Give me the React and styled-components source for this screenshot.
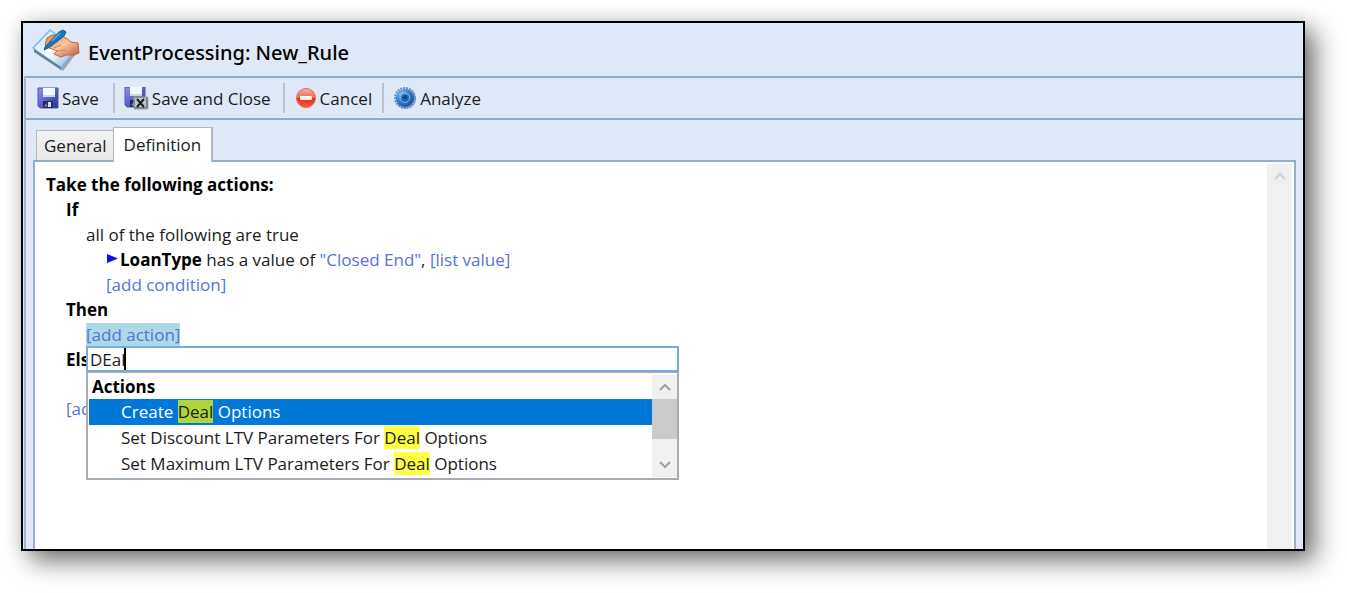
// src/App.jsx
import React, { useState } from 'react';
import styled, { createGlobalStyle } from 'styled-components';

const GlobalStyle = createGlobalStyle`
  *, *::before, *::after {
    box-sizing: border-box;
  }

  body {
    margin: 0;
    background: #fff;
    color: #1b1b1b;
    font-family: "Open Sans", "Noto Sans", sans-serif;
    font-size: 17px;
    line-height: 25px;
  }

  button, input {
    font: inherit;
    color: inherit;
  }
`;

const Page = styled.div`
  display: flex;
  min-height: 100vh;
  padding: 21px 42px 42px 21px;
`;

const Window = styled.main`
  flex: 1;
  display: flex;
  flex-direction: column;
  min-width: 0;
  background: #dfe8f7;
  border: 2px solid #000;
  box-shadow: 10px 10px 24px rgba(0, 0, 0, 0.55), 0 0 16px rgba(0, 0, 0, 0.1);
`;

const Header = styled.header`
  display: flex;
  align-items: center;
  gap: 6px;
  height: 53px;
  padding-left: 9px;
`;

const Title = styled.h1`
  margin: 0;
  padding-top: 6px;
  color: #000;
  font-family: "Noto Sans", "Open Sans", sans-serif;
  font-size: 20px;
  font-weight: 500;
  line-height: 28px;
`;

const Body = styled.div`
  flex: 1;
  display: flex;
  flex-direction: column;
  margin-left: 1px;
  border-left: 2px solid #9db8d6;
`;

const Toolbar = styled.div`
  display: flex;
  align-items: center;
  height: 44px;
  padding-left: 3px;
  border-top: 2px solid #8eabc8;
  border-bottom: 2px solid #8eabc8;
`;

const ToolButton = styled.button`
  display: flex;
  align-items: center;
  gap: 3px;
  height: 30px;
  padding: 1px ${props => props.$right || 10}px 0 ${props => props.$left || 8}px;
  background: none;
  border: 0;
  border-right: ${props => (props.$last ? '0' : '2px solid #b9c0cb')};
  white-space: nowrap;
`;

const Tabs = styled.div`
  display: flex;
  align-items: flex-end;
  height: 40px;
  padding-left: 10px;
`;

const Tab = styled.button`
  position: relative;
  height: ${props => (props.$active ? 35 : 30)}px;
  padding: 0 ${props => (props.$active ? 10 : 7)}px;
  background: ${props => (props.$active ? '#fff' : 'linear-gradient(#f2f2f2, #e8e8e8)')};
  border: 1px solid #b4b7bd;
  border-bottom: 0;
  border-right-width: ${props => (props.$active ? 2 : 0)}px;
  margin-bottom: ${props => (props.$active ? -2 : 0)}px;
  margin-left: ${props => (props.$active ? -1 : 0)}px;
  padding-bottom: ${props => (props.$active ? 2 : 0)}px;
  z-index: 1;
`;

const Panel = styled.section`
  flex: 1;
  display: flex;
  margin: 0 7px 0 7px;
  background: #fff;
  border: 2px solid #92aecb;
  border-bottom: 0;
`;

const Rule = styled.div`
  flex: 1;
  padding: 10px 0 0 11px;
`;

const Line = styled.div`
  position: relative;
  display: flex;
  align-items: center;
  height: 25px;
  padding-left: ${props => (props.$level || 0) * 20}px;
  margin-top: ${props => props.$skip || 0}px;
  color: ${props => (props.$bold ? '#000' : 'inherit')};
  font-weight: ${props => (props.$bold ? 700 : 400)};
  white-space: pre;
`;

const Term = styled.strong`
  color: #000;
  font-weight: 700;
`;

const RuleLink = styled.a`
  color: #5472e0;
  line-height: 23px;
  text-decoration: none;
  background: ${props => (props.$selected ? '#add8e6' : 'none')};
`;

const Popup = styled.div`
  position: absolute;
  top: 24px;
  left: 40px;
  z-index: 2;
  width: 593px;
`;

const SearchBox = styled.div`
  position: relative;
  display: flex;
`;

const SearchInput = styled.input`
  width: 100%;
  height: 26px;
  padding: 0 2px;
  background: #fff;
  border: 2px solid #78a9df;
  outline: 0;
  caret-color: transparent;
`;

const Caret = styled.span`
  position: absolute;
  top: 2px;
  left: 38px;
  width: 2px;
  height: 22px;
  background: #000;
`;

const List = styled.div`
  display: flex;
  padding: 2px 0 1px 1px;
  background: #fff;
  border: 2px solid #a9abb2;
  border-top-width: 1px;
`;

const Options = styled.div`
  flex: 1;
`;

const GroupName = styled.div`
  height: 24px;
  padding-left: 3px;
  color: #000;
  font-weight: 700;
  line-height: 24px;
`;

const Option = styled.div`
  height: 26px;
  padding-left: 32px;
  color: ${props => (props.$active ? '#fff' : 'inherit')};
  background: ${props => (props.$active ? '#0078d7' : '#fff')};
  line-height: 26px;
  white-space: pre;
`;

const Match = styled.mark`
  color: #1b1b1b;
  background: ${props => (props.$active ? '#aed63c' : '#ffff45')};
`;

const ScrollTrack = styled.div`
  display: flex;
  flex-direction: column;
  justify-content: space-between;
  width: 25px;
  margin: ${props => props.$margin || 0};
  background: #f0f0f0;
`;

const ScrollButton = styled.button`
  display: flex;
  align-items: center;
  justify-content: center;
  height: 24px;
  padding: 0;
  background: none;
  border: 0;
`;

const Thumb = styled.div`
  height: 40px;
  margin-bottom: auto;
  background: #cbcbcb;
`;

const RuleIcon = () => (
  <svg width="50" height="46" viewBox="0 0 50 46" aria-hidden="true">
    <defs>
      <linearGradient id="paper" x1="0" y1="0" x2="1" y2="1">
        <stop offset="0" stopColor="#a9e2f5" />
        <stop offset="0.5" stopColor="#ffffff" />
        <stop offset="1" stopColor="#6fa9da" />
      </linearGradient>
      <linearGradient id="hand" x1="0" y1="0" x2="1" y2="1">
        <stop offset="0" stopColor="#e08850" />
        <stop offset="0.5" stopColor="#fbc79c" />
        <stop offset="1" stopColor="#b8553a" />
      </linearGradient>
    </defs>
    <path d="M4 23 19 5 46 24 31 44z" fill="#6f7884" opacity="0.6" />
    <path d="M1 21 18 3 44 22 29 41z" fill="url(#paper)" stroke="#78b8dc" strokeWidth="1.5" strokeLinejoin="round" />
    <path d="M2 22 29 40V43L2 25z" fill="#64809c" />
    <path d="M13 18 15 11 20 8 28 8 34 11 39 15 46 16 47 26 42 28 34 28 29 30 22 27 25 24 20 22 17 21z" fill="url(#hand)" stroke="#b9673f" strokeLinejoin="round" />
    <path d="M22 21 29 18M25 24 34 23" fill="none" stroke="#cf8457" />
    <path d="M13 20 27 5 31 3 34 5 32 9 18 20 12 23z" fill="#1878be" stroke="#105a9b" strokeLinejoin="round" />
    <path d="M20 14 28 6" stroke="#58acdf" strokeWidth="1.5" />
  </svg>
);

const SaveIcon = ({ close }) => (
  <svg width={close ? 25 : 22} height="24" viewBox={close ? '0 0 25 24' : '0 0 22 24'} aria-hidden="true">
    <defs>
      <linearGradient id="disk" x1="0" y1="0" x2="1" y2="1">
        <stop offset="0" stopColor="#9192e6" />
        <stop offset="0.5" stopColor="#5964ca" />
        <stop offset="1" stopColor="#273089" />
      </linearGradient>
    </defs>
    <g transform={close ? 'translate(0 -1)' : undefined}>
      <path d="M1 1H21V21H3L1 19z" fill="url(#disk)" stroke="#4e56b5" />
      <path d="M6 1H18V10H6z" fill="#f3f7ff" />
      <path d="M6 8H18V10H6z" fill="#c8d7ef" />
      <path d="M6 14H16V21H6z" fill="#28295f" />
      <path d="M11 15H14V20H11z" fill="#d9dcf1" />
      <path d="M7 19 10 16V20z" fill="#7681b2" />
    </g>
    {close && (
      <g>
        <path d="M10 10H24V22H10z" fill="#777b80" stroke="#a3a6aa" />
        <path d="M11 11H22V20H11z" fill="#bfc4c6" />
        <path d="M13 12 20 20M20 12 13 20" stroke="#1b1d20" strokeWidth="2" />
      </g>
    )}
  </svg>
);

const CancelIcon = () => (
  <svg width="22" height="24" viewBox="0 0 22 24" aria-hidden="true">
    <defs>
      <linearGradient id="stop" x1="0" y1="0" x2="0" y2="1">
        <stop offset="0" stopColor="#f6b3a4" />
        <stop offset="0.48" stopColor="#ee6755" />
        <stop offset="0.52" stopColor="#e42c1b" />
        <stop offset="1" stopColor="#fb5f42" />
      </linearGradient>
    </defs>
    <circle cx="11" cy="11" r="9.5" fill="url(#stop)" stroke="#e46a59" />
    <rect x="5" y="9" width="12" height="4" rx="1" fill="#fff1ed" />
  </svg>
);

const AnalyzeIcon = () => (
  <svg width="24" height="24" viewBox="0 0 24 24" aria-hidden="true">
    <defs>
      <radialGradient id="gear" cx="0.35" cy="0.3" r="0.75">
        <stop offset="0" stopColor="#8fc6f0" />
        <stop offset="0.5" stopColor="#3b82d0" />
        <stop offset="1" stopColor="#174a9c" />
      </radialGradient>
    </defs>
    <circle cx="13" cy="12" r="10" fill="#8c97a8" opacity="0.7" />
    <circle cx="12" cy="11" r="10" fill="none" stroke="#5f8fc6" strokeWidth="2" strokeDasharray="2 1" />
    <circle cx="12" cy="11" r="9" fill="url(#gear)" />
    <circle cx="12" cy="11" r="4.5" fill="#2863b2" stroke="#79b6e8" />
    <circle cx="12" cy="10.5" r="2" fill="#173e7e" />
  </svg>
);

const ArrowIcon = () => (
  <svg width="14" height="12" viewBox="0 0 14 12" aria-hidden="true">
    <path d="M1 0 12 4.5 1 9z" fill="#0a0af5" />
  </svg>
);

const Chevron = ({ down, color = '#a0a0a0' }) => (
  <svg width="12" height="8" viewBox="0 0 12 8" aria-hidden="true">
    <path d={down ? 'M1 1 6 6 11 1' : 'M1 7 6 2 11 7'} fill="none" stroke={color} strokeWidth="2" />
  </svg>
);

const options = [
  { before: 'Create ', after: ' Options' },
  { before: 'Set Discount LTV Parameters For ', after: ' Options' },
  { before: 'Set Maximum LTV Parameters For ', after: ' Options' },
];

const ActionPicker = () => {
  const [query, setQuery] = useState('DEal');

  return (
    <Popup>
      <SearchBox>
        <SearchInput
          type="text"
          aria-label="Search actions"
          value={query}
          onChange={e => setQuery(e.target.value)}
        />
        <Caret />
      </SearchBox>
      <List>
        <Options role="listbox" aria-label="Actions">
          <GroupName>Actions</GroupName>
          {options.map((option, index) => (
            <Option key={option.before} role="option" aria-selected={index === 0} $active={index === 0}>
              {option.before}<Match $active={index === 0}>Deal</Match>{option.after}
            </Option>
          ))}
        </Options>
        <ScrollTrack>
          <ScrollButton aria-label="Scroll up"><Chevron /></ScrollButton>
          <Thumb />
          <ScrollButton aria-label="Scroll down"><Chevron down /></ScrollButton>
        </ScrollTrack>
      </List>
    </Popup>
  );
};

const App = () => {
  return (
    <>
      <GlobalStyle />
      <Page>
        <Window>
          <Header>
            <RuleIcon />
            <Title>EventProcessing: New_Rule</Title>
          </Header>
          <Body>
            <Toolbar>
              <ToolButton $right={14}><SaveIcon />Save</ToolButton>
              <ToolButton $left={9} $right={12}><SaveIcon close />Save and Close</ToolButton>
              <ToolButton $left={10}><CancelIcon />Cancel</ToolButton>
              <ToolButton $left={9} $last><AnalyzeIcon />Analyze</ToolButton>
            </Toolbar>
            <Tabs role="tablist">
              <Tab role="tab" aria-selected={false}>General</Tab>
              <Tab role="tab" aria-selected $active>Definition</Tab>
            </Tabs>
            <Panel>
              <Rule>
                <Line $bold>Take the following actions:</Line>
                <Line $level={1} $bold>If</Line>
                <Line $level={2}>all of the following are true</Line>
                <Line $level={3}>
                  <ArrowIcon />
                  <Term>LoanType</Term> has a value of <RuleLink href="#value">"Closed End"</RuleLink>, <RuleLink href="#list">[list value]</RuleLink>
                </Line>
                <Line $level={3}><RuleLink href="#condition">[add condition]</RuleLink></Line>
                <Line $level={1} $bold>Then</Line>
                <Line $level={2}>
                  <RuleLink href="#action" $selected>[add action]</RuleLink>
                  <ActionPicker />
                </Line>
                <Line $level={1} $bold>Else</Line>
                {/* the open picker lies over the action row of Else */}
                <Line $level={1} $skip={24}><RuleLink href="#section">[add section]</RuleLink></Line>
              </Rule>
              <ScrollTrack $margin="2px 2px 0 0">
                <ScrollButton aria-label="Scroll up"><Chevron color="#d0d0d0" /></ScrollButton>
              </ScrollTrack>
            </Panel>
          </Body>
        </Window>
      </Page>
    </>
  );
};

export default App;
